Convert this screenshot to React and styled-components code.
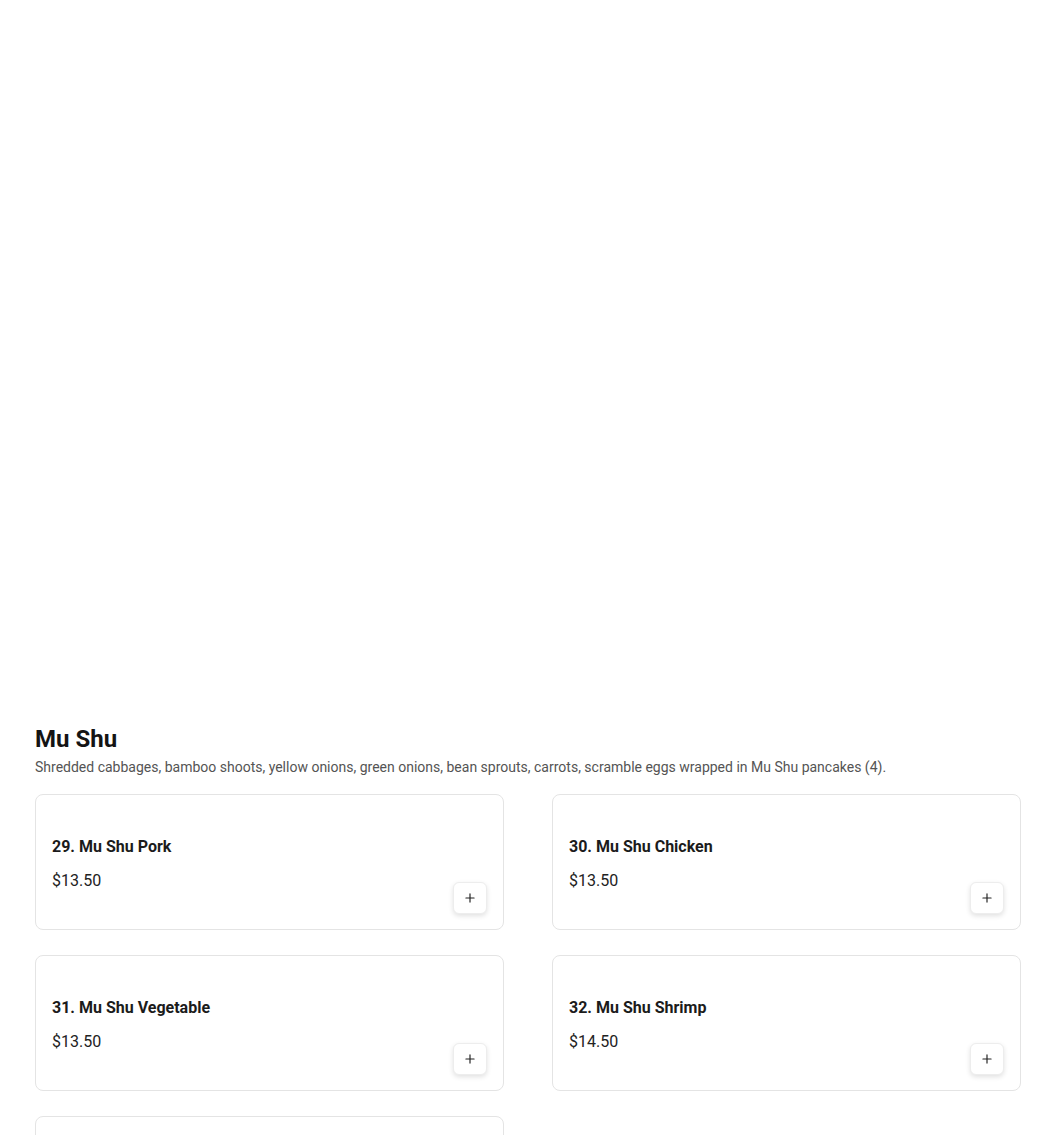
import styled, {createGlobalStyle} from "styled-components";
import {Plus} from "lucide-react";

const GlobalStyle = createGlobalStyle`
  body {
    margin: 0;
    background: #fff;
    font-family: Roboto, "Liberation Sans", Arial, sans-serif;
    color: #191919;
  }
`

const Page = styled.div`
  padding-top: 723px;
  padding-left: 35px;
`

const Section = styled.section`
  width: 986px;
`

const Title = styled.h2`
  margin: 0;
  font-size: 24px;
  line-height: 32px;
  font-weight: 700;
  color: #141414;
`

const Subtitle = styled.p`
  margin: 2px 0 0;
  font-size: 14px;
  line-height: 20px;
  color: #545454;
`

const Grid = styled.div`
  margin-top: 17px;
  display: grid;
  grid-template-columns: 469px 469px;
  column-gap: 48px;
  row-gap: 25px;
`

const Card = styled.div`
  box-sizing: border-box;
  height: 136px;
  padding: 16px 16px 15px;
  border: 1px solid #e4e4e4;
  border-radius: 8px;
  background: #fff;
  display: flex;
  justify-content: space-between;
`

const Info = styled.div`
  padding-top: 24px;
  display: flex;
  flex-direction: column;
`

const Name = styled.div`
  font-size: 16px;
  line-height: 24px;
  font-weight: 700;
  color: #1b1b1b;
`

const Price = styled.div`
  margin-top: 10px;
  font-size: 16px;
  line-height: 24px;
  color: #222;
`

const AddButton = styled.button`
  align-self: flex-end;
  width: 34px;
  height: 32px;
  padding: 0;
  border: 1px solid #ededed;
  border-radius: 6px;
  background: #fff;
  box-shadow: 0 2px 5px rgba(0, 0, 0, 0.12);
  display: flex;
  align-items: center;
  justify-content: center;
  color: #222;
  cursor: pointer;
`

const items = [
    {name: "29. Mu Shu Pork", price: "$13.50"},
    {name: "30. Mu Shu Chicken", price: "$13.50"},
    {name: "31. Mu Shu Vegetable", price: "$13.50"},
    {name: "32. Mu Shu Shrimp", price: "$14.50"},
    {name: "33. Mu Shu Beef", price: "$14.50"},
]

const App = () => {
    return (
        <Page>
            <GlobalStyle/>
            <Section>
                <Title>Mu Shu</Title>
                <Subtitle>
                    Shredded cabbages, bamboo shoots, yellow onions, green onions, bean sprouts, carrots, scramble eggs wrapped in Mu Shu pancakes (4).
                </Subtitle>
                <Grid>
                    {items.map(item => (
                        <Card key={item.name}>
                            <Info>
                                <Name>{item.name}</Name>
                                <Price>{item.price}</Price>
                            </Info>
                            <AddButton aria-label={`Add ${item.name}`}>
                                <Plus size={14} strokeWidth={2}/>
                            </AddButton>
                        </Card>
                    ))}
                </Grid>
            </Section>
        </Page>
    )
};

export default App;
